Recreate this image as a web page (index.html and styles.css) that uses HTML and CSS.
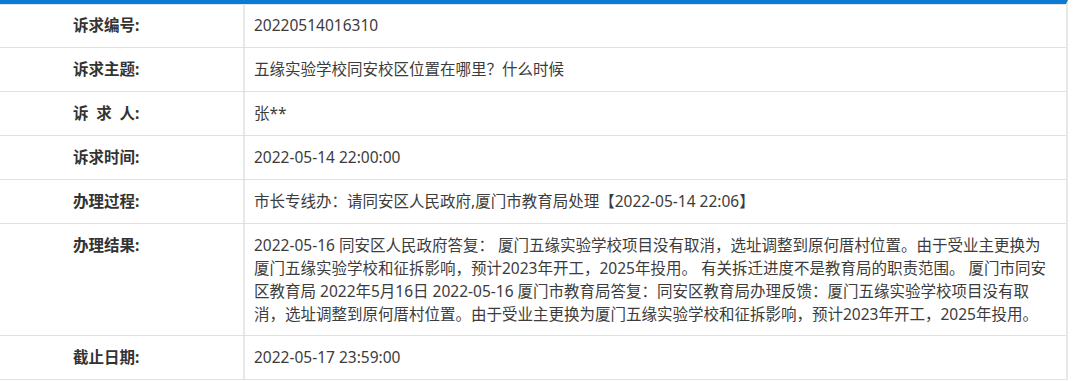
FILE: index.html
```html
<!DOCTYPE html>
<html lang="zh">
<head>
<meta charset="utf-8">
<link rel="stylesheet" href="styles.css">
</head>
<body>
<div class="detail">
  <div class="row"><div class="label">诉求编号:</div><div class="value">20220514016310</div></div>
  <div class="row"><div class="label">诉求主题:</div><div class="value">五缘实验学校同安校区位置在哪里？什么时候</div></div>
  <div class="row"><div class="label">诉&ensp;求&ensp;人:</div><div class="value">张**</div></div>
  <div class="row"><div class="label">诉求时间:</div><div class="value">2022-05-14 22:00:00</div></div>
  <div class="row"><div class="label">办理过程:</div><div class="value">市长专线办：请同安区人民政府,厦门市教育局处理【2022-05-14 22:06】</div></div>
  <div class="row row-multi"><div class="label">办理结果:</div><div class="value">2022-05-16 同安区人民政府答复： 厦门五缘实验学校项目没有取消，选址调整到原何厝村位置。由于受业主更换为<br>厦门五缘实验学校和征拆影响，预计2023年开工，2025年投用。 有关拆迁进度不是教育局的职责范围。 厦门市同安<br>区教育局 2022年5月16日 2022-05-16 厦门市教育局答复：同安区教育局办理反馈：厦门五缘实验学校项目没有取<br>消，选址调整到原何厝村位置。由于受业主更换为厦门五缘实验学校和征拆影响，预计2023年开工，2025年投用。</div></div>
  <div class="row"><div class="label">截止日期:</div><div class="value">2022-05-17 23:59:00</div></div>
</div>
</body>
</html>
```

FILE: styles.css
```css
html, body {
  margin: 0;
  padding: 0;
  background: #fff;
}
body {
  font-family: "Noto Sans", "Noto Sans CJK SC", sans-serif;
  color: #333;
}
.detail {
  width: 1066px;
  border-top: 4px solid #0a7bd1;
  border-right: 2px solid #e8e8e8;
}
.row {
  display: grid;
  grid-template-columns: 245px 1fr;
  border-bottom: 1px solid #e0e0e0;
}
.row:first-child .label,
.row:first-child .value {
  box-shadow: inset 0 1px 0 #e3e3e3;
}
.label {
  padding: 10px 0 10px 73px;
  font-size: 15.5px;
  line-height: 23px;
  font-weight: bold;
  color: #333;
  border-right: 2px solid #e8e8e8;
}
.value {
  padding: 10px 0 10px 9px;
  font-size: 15.5px;
  line-height: 23px;
  color: #3c3c3c;
}
.row-multi .label,
.row-multi .value {
  padding-bottom: 9px;
}
```
